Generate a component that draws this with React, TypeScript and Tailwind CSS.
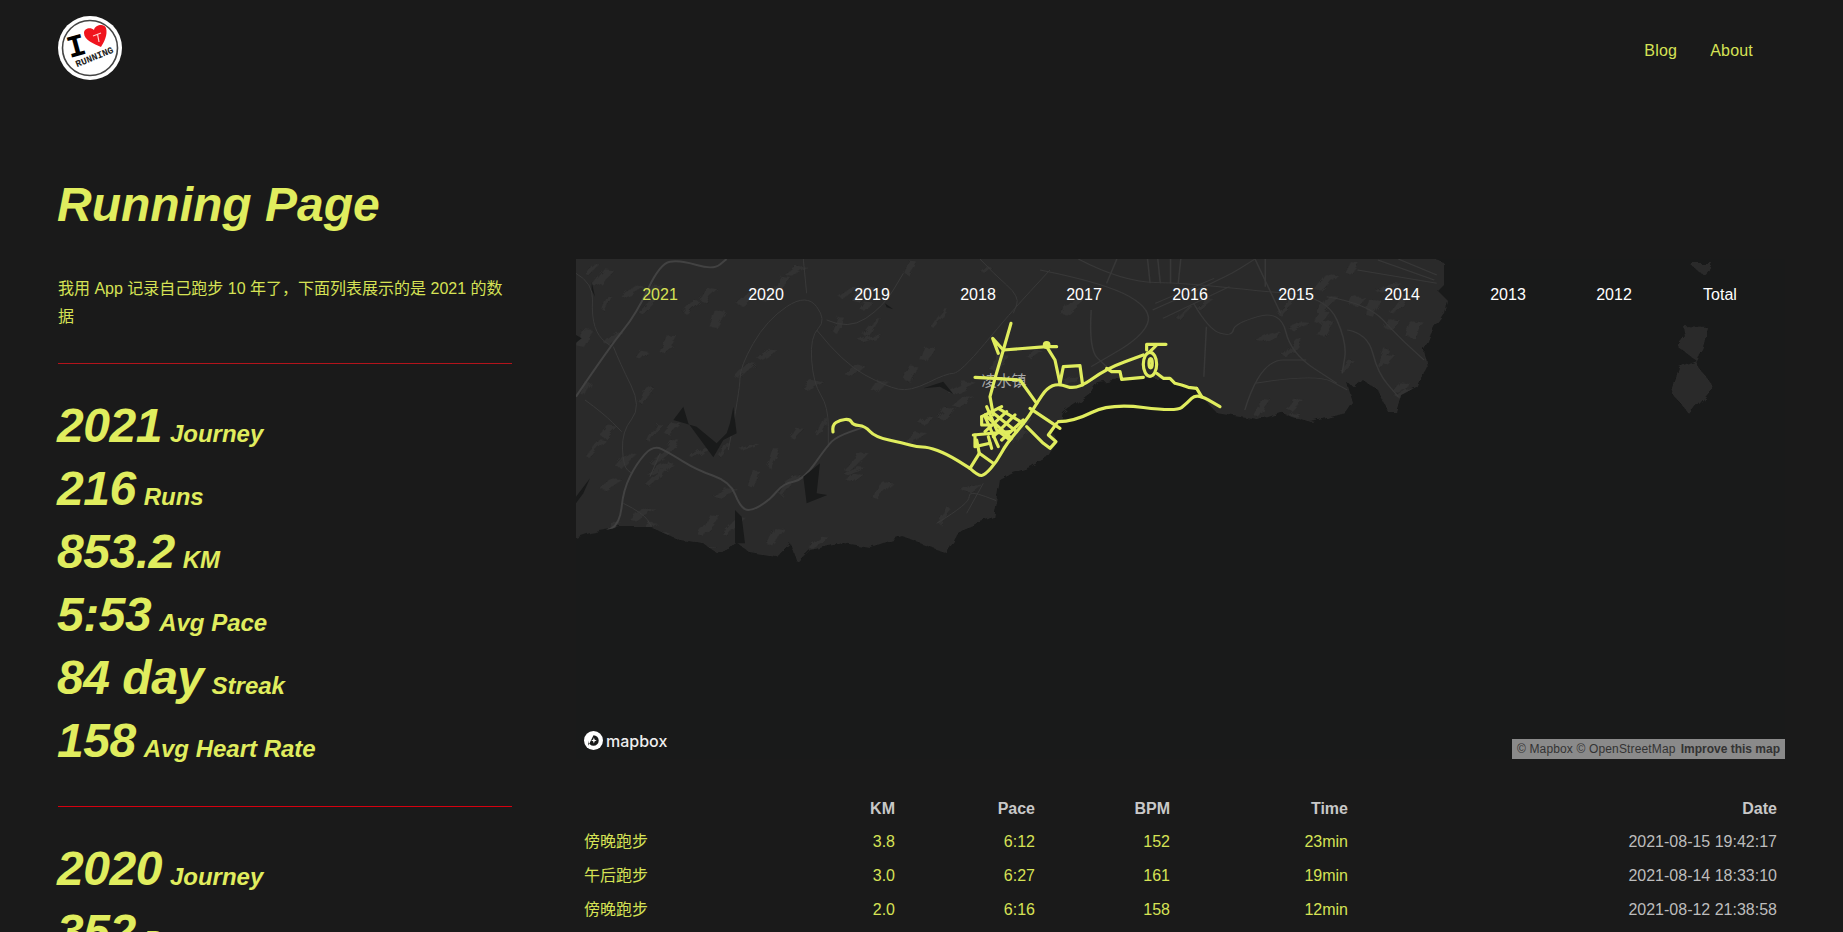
const LIME = "#e0ed5e";

type Stat = { value: string; label: string };

const stats2021: Stat[] = [
  { value: "2021", label: "Journey" },
  { value: "216", label: "Runs" },
  { value: "853.2", label: "KM" },
  { value: "5:53", label: "Avg Pace" },
  { value: "84 day", label: "Streak" },
  { value: "158", label: "Avg Heart Rate" },
];

const stats2020: Stat[] = [
  { value: "2020", label: "Journey" },
  { value: "352", label: "Runs" },
];

const years = ["2021", "2020", "2019", "2018", "2017", "2016", "2015", "2014", "2013", "2012", "Total"];

const runs = [
  { name: "傍晚跑步", km: "3.8", pace: "6:12", bpm: "152", time: "23min", date: "2021-08-15 19:42:17" },
  { name: "午后跑步", km: "3.0", pace: "6:27", bpm: "161", time: "19min", date: "2021-08-14 18:33:10" },
  { name: "傍晚跑步", km: "2.0", pace: "6:16", bpm: "158", time: "12min", date: "2021-08-12 21:38:58" },
];

// map shapes, page coordinates
const LAND =
  "M560 245 L1434 245 L1434 259 L1444 263 L1444 283 L1437 290 L1447 300 L1444 313 L1434 327 L1424 350 L1427 367 L1416 387 L1401 395 L1396 412 L1388 412 L1378 390 L1363 380 L1355 387 L1347 383 L1353 403 L1346 413 L1311 422 L1281 413 L1258 420 L1217 413 L1202 397 L1193 387 L1163 378 L1130 378 L1097 382 L1090 393 L1063 413 L1060 423 L1053 433 L1057 443 L1047 457 L1030 467 L1013 473 L1000 480 L993 517 L960 530 L947 553 L903 537 L870 547 L843 543 L810 550 L797 562 L790 543 L777 557 L750 553 L737 543 L717 553 L703 543 L680 540 L650 527 L620 527 L590 533 L560 543 Z";
const ISLANDS = [
  "M1689 263 L1712 263 L1706 275 L1700 273 Z",
  "M1684 327 L1708 328 L1703 347 L1696 360 L1695 363 L1711 383 L1713 388 L1700 403 L1690 415 L1680 403 L1672 393 L1679 367 L1696 360 L1678 347 L1686 337 Z",
];

// 3x coordinates of the west half
const WATER = [
  "340,470 355,520 430,622 460,570 500,550 490,470 480,520 470,550 440,580 380,530 310,510",
  "700,680 750,640 740,730 772,735 710,760",
  "495,780 515,800 525,880 495,880",
  "18,740 60,685 40,730 18,760",
  "1060,415 1120,395 1150,432 1110,410",
  "65,95 75,140 65,120",
  "18,255 35,265 18,278",
  "945,160 970,178 950,172",
];
const ROADS_MAIN = [
  "18,870 100,850 150,820 160,720 200,640 250,585 300,610 380,660 480,695 510,770 540,785 600,750 640,700 700,690 770,590 800,560 885,530",
  "18,440 120,290 200,190 270,40 330,30 430,60 470,27",
];
const ROADS_THIN = [
  "130,290 150,340 215,470 155,545 160,650 185,670",
  "45,450 100,490 155,545",
  "475,600 510,420 510,350 590,210 710,130 770,210 720,260 730,400 775,470 775,590",
  "700,27 710,130",
  "770,210 835,240 940,170 1000,70",
  "740,240 820,340 950,410 1020,425 1130,370 1170,370 1320,190 1440,60",
  "1230,27 1270,70 1350,140 1330,190",
  "18,70 70,100 65,200 85,260 125,290",
  "160,760 220,790 245,830",
  "240,680 270,610",
  "1100,820 1200,760 1195,720 1300,760",
  "1190,790 1240,700",
];
// east half, in the 1.953 x 3 zoom grid
const ROADS_EAST = [
  "0,60 130,100 220,180 200,260 100,350",
  "75,27 160,95 290,100 410,120 560,140 600,280 590,370",
  "220,180 360,85 420,27",
  "240,205 370,110",
  "225,160 340,85",
  "300,160 330,240 375,260 380,220 470,180 490,310 580,400",
  "420,27 470,190",
  "560,140 640,160 700,260 750,330",
  "600,240 640,250 660,370 700,440",
  "400,480 430,330 520,330",
  "325,230 320,380",
  "100,180 95,300 130,350",
  "420,400 540,370 600,420",
  "620,60 775,100",
  "660,30 770,90",
  "700,27 775,75",
  "210,27 215,100",
  "255,27 255,100",
  "150,27 130,100",
  "230,27 235,100",
  "275,27 270,100",
  "440,27 440,110",
];

function patches() {
  const out: string[] = [];
  let seed = 17;
  const rnd = () => {
    seed = (seed * 16807) % 2147483647;
    return seed / 2147483647;
  };
  for (let i = 0; i < 170; i++) {
    const x = 576 + rnd() * 860;
    const y = 259 + rnd() * 300;
    const w = 4 + rnd() * 10;
    const h = 5 + rnd() * 13;
    const s = 4 + rnd() * 12;
    out.push(`${x},${y + h} ${x + s},${y} ${x + w + s},${y + 1} ${x + w * 0.6},${y + h + 2}`);
  }
  return out;
}

// rounds a point list into a curve through the midpoints
function smooth(points: string) {
  const pts = points.split(" ").map((p) => p.split(",").map(Number));
  let d = `M${pts[0][0]} ${pts[0][1]}`;
  for (let i = 1; i < pts.length - 1; i++) {
    const mx = (pts[i][0] + pts[i + 1][0]) / 2;
    const my = (pts[i][1] + pts[i + 1][1]) / 2;
    d += ` Q${pts[i][0]} ${pts[i][1]} ${mx} ${my}`;
  }
  const last = pts[pts.length - 1];
  return `${d} L${last[0]} ${last[1]}`;
}

// route, in a 3x grid starting at 930,300
const ROUTE = [
  "-291,396 -294,375 -270,360 -240,357 -231,375 -195,378 -165,411 -81,429 -39,441 -6,441 51,462 120,505",
  "120,505 145,528 165,525 200,485 230,430 290,360 320,310 350,265 385,250 440,270 530,205 640,165",
  "385,365 430,365 540,310 740,335 770,310 800,280 870,320",
  "120,505 148,460 190,490",
  "130,405 240,395",
  "135,405 135,440 180,430",
  "148,460 140,420",
  "175,410 185,445",
  "205,440 165,350",
  "155,350 215,320",
  "155,350 155,375 185,375",
  "170,320 200,390 240,420",
  "165,345 245,415",
  "185,335 260,395",
  "205,325 280,370",
  "165,395 230,335",
  "190,410 255,345",
  "215,420 280,360",
  "190,345 180,290 195,235 135,232",
  "195,235 270,240 320,310",
  "195,235 220,150 243,70",
  "220,150 188,115 205,160",
  "220,150 350,140 380,140",
  "350,140 375,180 390,250",
  "390,250 400,200 450,197 458,255",
  "300,325 390,385",
  "290,380 340,430 360,445 378,425 355,405 380,370",
  "800,265 815,290",
  "680,220 700,235 720,235 735,250 755,255 775,262 800,265",
  "530,205 545,215 570,215 575,238 640,232",
  "650,150 650,133 708,133",
  "660,155 680,135",
];

function RunMap() {
  return (
    <svg viewBox="576 259 1209 500" className="block h-[500px] w-full bg-[#191a1a]">
      <defs>
        <clipPath id="land">
          <path d={LAND} />
        </clipPath>
        <filter id="rough" x="-2%" y="-2%" width="104%" height="104%">
          <feTurbulence type="fractalNoise" baseFrequency="0.09" numOctaves="2" seed="4" />
          <feDisplacementMap in="SourceGraphic" scale="7" />
        </filter>
      </defs>
      <g filter="url(#rough)">
        <path d={LAND} fill="#2b2b2b" />
        {ISLANDS.map((d) => (
          <path key={d} d={d} fill="#2b2b2b" />
        ))}
      </g>
      <g clipPath="url(#land)">
        <g filter="url(#rough)">
          {patches().map((p) => (
            <polygon key={p} points={p} fill="#313131" />
          ))}
        </g>
        <g transform="translate(570 250) scale(0.3333)" fill="none" stroke="#393939">
          {ROADS_THIN.map((p) => (
            <path key={p} d={smooth(p)} strokeWidth="3" />
          ))}
          {ROADS_MAIN.map((p) => (
            <path key={p} d={smooth(p)} strokeWidth="6" stroke="#424242" />
          ))}
          {WATER.map((p) => (
            <polygon key={p} points={p} fill="#191a1a" stroke="none" />
          ))}
        </g>
        <g transform="translate(1040 250) scale(0.512 0.3333)" fill="none" stroke="#383838">
          {ROADS_EAST.map((p) => (
            <path key={p} d={smooth(p)} strokeWidth="3" />
          ))}
        </g>
      </g>
      <text
        x="1004"
        y="386"
        textAnchor="middle"
        fontSize="15"
        fill="#a8a8a8"
        style={{ fontFamily: '"Noto Sans CJK SC", sans-serif' }}
      >
        凌水镇
      </text>
      <g transform="translate(930 300) scale(0.3333)" fill="none" stroke={LIME} strokeWidth="9.5" strokeLinejoin="round" strokeLinecap="round">
        {ROUTE.map((p, i) => (
          <path key={p} d={i < 3 ? smooth(p) : `M${p.replaceAll(" ", " L")}`} />
        ))}
        <ellipse cx="660" cy="193" rx="20" ry="36" />
        <ellipse cx="662" cy="190" rx="5" ry="14" />
        <circle cx="350" cy="135" r="7" fill={LIME} />
      </g>
    </svg>
  );
}

function Logo() {
  return (
    <svg viewBox="0 0 64 64" className="h-16 w-16">
      <circle cx="32" cy="32" r="32" fill="#ffffff" />
      <circle cx="32" cy="32" r="27.5" fill="none" stroke="#444444" strokeWidth="1.6" />
      <text
        x="18.5"
        y="40"
        textAnchor="middle"
        fontSize="31"
        fontWeight="700"
        fill="#000000"
        transform="rotate(-15 18.5 31)"
        style={{ fontFamily: '"Liberation Mono", monospace' }}
      >
        I
      </text>
      <path
        d="M43 31 C36 28 26 24 26 17 C26 12 33 11 36 14 C37 9 46 7 48 12 C50 19 46 26 43 31 Z"
        fill="#f0141e"
      />
      <path d="M35 20 L43 17 M39.5 18 L41 26" stroke="#ffd0d0" strokeWidth="1.2" fill="none" />
      <text
        x="36.5"
        y="44"
        textAnchor="middle"
        fontSize="9.5"
        fontWeight="700"
        fill="#222222"
        transform="rotate(-22 36.5 41)"
        style={{ fontFamily: '"Liberation Mono", monospace' }}
      >
        RUNNING
      </text>
    </svg>
  );
}

function StatRow({ value, label }: Stat) {
  return (
    <div className="-ml-px h-[63px] whitespace-nowrap italic font-bold leading-[63px] text-[#e0ed5e]">
      <span className="text-[48px] tracking-[-0.01em]">{value}</span>
      <span className="ml-2 text-[24px]">{label}</span>
    </div>
  );
}

export default function App() {
  return (
    <div
      className="h-[932px] overflow-hidden bg-[#1a1a1a] text-[16px] text-[#d6e255]"
      style={{ fontFamily: '"Liberation Sans", "Noto Sans CJK SC", sans-serif' }}
    >
      {/* Header */}
      <nav className="flex h-[97px] items-start justify-between pl-[58px] pr-[90px] pt-4">
        <Logo />
        <div className="flex gap-[33px] pt-[23px] tracking-[0.2px]">
          <a href="#">Blog</a>
          <a href="#">About</a>
        </div>
      </nav>

      <div className="flex pl-[58px] pr-[58px]">
        {/* Left column */}
        <div className="w-[454px] shrink-0">
          <h1 className="-ml-px mt-[80px] text-[48px] font-bold italic leading-[56px] text-[#e0ed5e]">Running Page</h1>
          <p className="mt-[42px] text-[16px] leading-[28px]">
            我用 App 记录自己跑步 10 年了，下面列表展示的是 2021 的数据
          </p>
          <div className="mt-[32px] h-px bg-[#b3131b]" />

          <div className="mt-[30px]">
            {stats2021.map((s) => (
              <StatRow key={s.label} {...s} />
            ))}
          </div>
          <div className="mt-[34px] h-px bg-[#d6000f]" />
          <div className="mt-[30px]">
            {stats2020.map((s) => (
              <StatRow key={s.label} {...s} />
            ))}
          </div>
        </div>

        {/* Right column */}
        <div className="ml-[64px] flex-1 pt-[162px]">
          <div className="relative h-[500px]">
            <RunMap />
            <div className="absolute left-[31px] top-[19px] flex">
              {years.map((y, i) => (
                <span key={y} className={`w-[106px] text-center leading-[34px] ${i === 0 ? "text-[#d6e255]" : "text-white"}`}>
                  {y}
                </span>
              ))}
            </div>
            <div className="absolute bottom-[9px] left-2 flex items-center gap-[3px]">
              <svg viewBox="0 0 20 20" className="h-[19px] w-[19px]">
                <circle cx="10" cy="10" r="10" fill="#ffffff" />
                <path d="M10 4.5 a5.5 5.5 0 1 1 -5.5 5.5 L4.5 15.5 Z" fill="#191a1a" />
                <path d="M10.4 6.8 L11.2 9.2 L13.4 10 L11.2 10.8 L10.4 13.2 L9.6 10.8 L7.4 10 L9.6 9.2 Z" fill="#ffffff" />
              </svg>
              <span className="text-[16px] font-medium leading-none text-[#eeeeee]" style={{ fontFamily: "Inter, sans-serif" }}>
                mapbox
              </span>
            </div>
            <div className="absolute bottom-0 right-0 flex h-5 items-center gap-[5px] bg-[#8a8a8a] px-[5px] text-[12px] text-[#333333]">
              <span className="tracking-[0.15px]">© Mapbox © OpenStreetMap</span>
              <span className="font-bold">Improve this map</span>
            </div>
          </div>

          {/* Table */}
          <table className="mt-[33px] w-full table-fixed border-collapse">
            <thead>
              <tr className="h-[33px] text-right font-bold text-[#c8c8c8]">
                <th className="w-[207px]"></th>
                <th className="w-[120px] px-2 text-right">KM</th>
                <th className="w-[140px] px-2 text-right">Pace</th>
                <th className="w-[135px] px-2 text-right">BPM</th>
                <th className="w-[178px] px-2 text-right">Time</th>
                <th className="px-2 text-right">Date</th>
              </tr>
            </thead>
            <tbody>
              {runs.map((r) => (
                <tr key={r.date} className="h-[34px]">
                  <td className="px-2">{r.name}</td>
                  <td className="px-2 text-right">{r.km}</td>
                  <td className="px-2 text-right">{r.pace}</td>
                  <td className="px-2 text-right">{r.bpm}</td>
                  <td className="px-2 text-right">{r.time}</td>
                  <td className="px-2 text-right text-[#bdbdbd]">{r.date}</td>
                </tr>
              ))}
            </tbody>
          </table>
        </div>
      </div>
    </div>
  );
}
